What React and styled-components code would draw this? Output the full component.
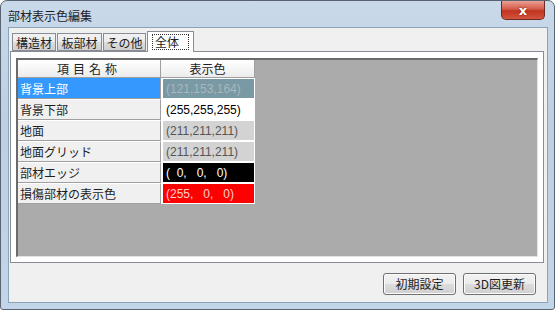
import React from 'react'
import styled, { createGlobalStyle } from 'styled-components'

const Global = createGlobalStyle`
  html, body {
    margin: 0;
    padding: 0;
    background: #ffffff;
  }
  body {
    font-family: "Noto Sans CJK JP", "Noto Sans", sans-serif;
    font-size: 12px;
  }
`

const Window = styled.div`
  box-sizing: border-box;
  width: 555px;
  height: 310px;
  border: 1px solid #5a6470;
  border-radius: 7px 7px 3px 3px;
  background: linear-gradient(180deg, #c9d9ea 0%, #bccfe3 40%, #c3d5e8 100%);
  padding: 0 6px 6px 7px;
  display: flex;
  flex-direction: column;
`

const TitleBar = styled.div`
  height: 26px;
  display: flex;
  align-items: center;
  justify-content: space-between;
`

const Title = styled.div`
  color: #1e1e1e;
  font-size: 12px;
  padding-top: 2px;
`

const CloseBtn = styled.div`
  width: 42px;
  height: 18px;
  margin-top: -7px;
  margin-right: 3px;
  border: 1px solid #6e2a22;
  border-top: none;
  border-radius: 0 0 5px 5px;
  background: linear-gradient(180deg, #e8a093 0%, #d45a48 45%, #c0331f 55%, #d2553f 100%);
  display: flex;
  align-items: center;
  justify-content: center;
  color: #ffffff;
  font-family: "DejaVu Sans", sans-serif;
  font-weight: bold;
  font-size: 13px;
  text-shadow: 0 0 2px #6a1b10;
`

const Client = styled.div`
  flex: 1;
  background: #f0f0f0;
  border: 1px solid #8ea2b6;
  display: flex;
  flex-direction: column;
  padding: 3px 3px 0 1px;
`

const TabBar = styled.div`
  display: flex;
  align-items: flex-end;
  height: 20px;
  padding-left: 2px;
  position: relative;
  z-index: 1;
`

const Tab = styled.div`
  box-sizing: border-box;
  width: ${p => p.$w}px;
  height: ${p => (p.$active ? 21 : 18)}px;
  margin-bottom: ${p => (p.$active ? -1 : 0)}px;
  margin-right: ${p => (p.$active ? 0 : 1)}px;
  border: 1px solid #898c95;
  border-bottom: ${p => (p.$active ? 'none' : '1px solid #898c95')};
  background: ${p => (p.$active ? '#ffffff' : 'linear-gradient(180deg, #f2f2f2 0%, #ebebeb 50%, #dddddd 51%, #cfcfcf 100%)')};
  display: flex;
  align-items: center;
  justify-content: center;
  color: #1e1e1e;
  font-size: 12px;
`

const Focus = styled.span`
  border: 1px dotted #333;
  padding: 0 9px 0 2px;
  line-height: 14px;
  margin-top: -1px;
`

const Panel = styled.div`
  box-sizing: border-box;
  height: 212px;
  border: 1px solid #898c95;
  background: #ffffff;
  padding: 6px 5px 5px 5px;
  display: flex;
`

const Grid = styled.div`
  flex: 1;
  background: #ababab;
  border-top: 2px solid #6b6b6b;
  border-left: 2px solid #6b6b6b;
  border-right: 1px solid #e3e3e3;
  border-bottom: 1px solid #e3e3e3;
  display: flex;
  align-items: flex-start;
`

const Table = styled.div`
  display: grid;
  grid-template-columns: 143px 94px;
  background: #ffffff;
`

const HeadCell = styled.div`
  height: 18px;
  box-sizing: border-box;
  background: linear-gradient(180deg, #ffffff 0%, #f4f4f4 60%, #ebebeb 100%);
  border-right: 1px solid #a0a0a0;
  border-bottom: 1px solid #a0a0a0;
  display: flex;
  align-items: center;
  justify-content: center;
  color: #1e1e1e;
  letter-spacing: ${p => p.$spaced ? '4px' : '0'};
`

const NameCell = styled.div`
  height: 21px;
  box-sizing: border-box;
  background: ${p => (p.$sel ? '#3399ff' : '#f0f0f0')};
  color: ${p => (p.$sel ? '#ffffff' : '#1e1e1e')};
  border-right: 1px solid #a0a0a0;
  border-bottom: 1px solid #a0a0a0;
  border-top: 1px solid ${p => (p.$sel ? '#3399ff' : '#ffffff')};
  display: flex;
  align-items: center;
  padding-left: 2px;
`

const ColorCell = styled.div`
  height: 21px;
  box-sizing: border-box;
  padding: 1px 1px 1px 2px;
  background: #ffffff;
  display: flex;
`

const Swatch = styled.div`
  flex: 1;
  display: flex;
  align-items: center;
  padding-left: 3px;
  font-family: "Liberation Sans Narrow", "Liberation Sans", sans-serif;
  font-size: 12px;
  white-space: pre;
`

const Footer = styled.div`
  flex: 1;
  display: flex;
  justify-content: flex-end;
  align-items: center;
  gap: 7px;
  padding-right: 8px;
  padding-top: 2px;
`

const Button = styled.button`
  width: 73px;
  height: 22px;
  border: 1px solid #707070;
  border-radius: 3px;
  background: linear-gradient(180deg, #f2f2f2 0%, #ebebeb 50%, #dddddd 51%, #cfcfcf 100%);
  box-shadow: inset 0 0 0 1px #fcfcfc;
  font-family: "Noto Sans CJK JP", sans-serif;
  font-size: 12px;
  color: #1e1e1e;
  padding: 0;
`

const rows = [
  { name: '背景上部', value: '(121,153,164)', bg: 'rgb(121,153,164)', fg: '#a9b8be', sel: true },
  { name: '背景下部', value: '(255,255,255)', bg: '#ffffff', fg: '#000000' },
  { name: '地面', value: '(211,211,211)', bg: 'rgb(211,211,211)', fg: '#555555' },
  { name: '地面グリッド', value: '(211,211,211)', bg: 'rgb(211,211,211)', fg: '#555555' },
  { name: '部材エッジ', value: '(  0,   0,   0)', bg: '#000000', fg: '#ffffff' },
  { name: '損傷部材の表示色', value: '(255,   0,   0)', bg: '#ff0000', fg: '#ffd0d0' },
]

const tabs = [
  { label: '構造材', w: 44 },
  { label: '板部材', w: 45 },
  { label: 'その他', w: 43 },
]

export default function App() {
  return (
    <>
      <Global />
      <Window>
        <TitleBar>
          <Title>部材表示色編集</Title>
          <CloseBtn>x</CloseBtn>
        </TitleBar>
        <Client>
          <TabBar>
            {tabs.map(t => (
              <Tab key={t.label} $w={t.w}>{t.label}</Tab>
            ))}
            <Tab $w={47} $active>
              <Focus>全体</Focus>
            </Tab>
          </TabBar>
          <Panel>
            <Grid>
              <Table>
                <HeadCell $spaced>項目名称</HeadCell>
                <HeadCell>表示色</HeadCell>
                {rows.map(r => (
                  <React.Fragment key={r.name}>
                    <NameCell $sel={r.sel}>{r.name}</NameCell>
                    <ColorCell>
                      <Swatch style={{ background: r.bg, color: r.fg }}>{r.value}</Swatch>
                    </ColorCell>
                  </React.Fragment>
                ))}
              </Table>
            </Grid>
          </Panel>
          <Footer>
            <Button>初期設定</Button>
            <Button>3D図更新</Button>
          </Footer>
        </Client>
      </Window>
    </>
  )
}
